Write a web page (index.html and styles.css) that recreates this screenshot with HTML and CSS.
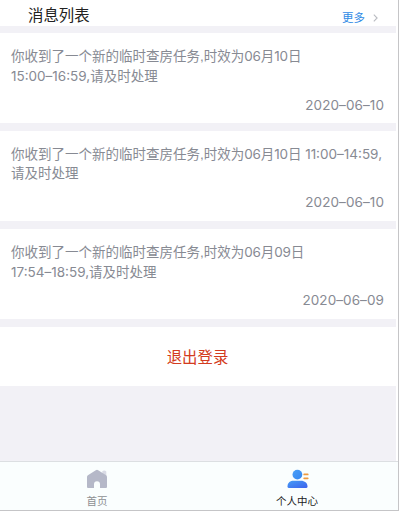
FILE: index.html
```
<!DOCTYPE html>
<html lang="zh-CN">
<head>
<meta charset="UTF-8">
<title>个人中心</title>
<link rel="stylesheet" href="styles.css">
</head>
<body>
<div class="phone">
  <main class="content">
    <header class="header">
      <h1 class="title">消息列表</h1>
      <a class="more">更多<svg class="chevron" width="5" height="8" viewBox="0 0 5 8"><path d="M0.8 0.7 4.1 4 0.8 7.3" fill="none" stroke="#b9bbc1" stroke-width="1.1"/></svg></a>
    </header>
    <section class="message">
      <p class="text">你收到了一个新的临时查房任务,时效为<span class="num">06</span>月<span class="num">10</span>日<br><span class="range">15:00–16:59,</span>请及时处理</p>
      <time class="date">2020–06–10</time>
    </section>
    <section class="message">
      <p class="text">你收到了一个新的临时查房任务,时效为<span class="num">06</span>月<span class="num">10</span>日 <span class="range">11:00–14:59,</span><br>请及时处理</p>
      <time class="date">2020–06–10</time>
    </section>
    <section class="message">
      <p class="text">你收到了一个新的临时查房任务,时效为<span class="num">06</span>月<span class="num">09</span>日<br><span class="range">17:54–18:59,</span>请及时处理</p>
      <time class="date">2020–06–09</time>
    </section>
    <button class="logout">退出登录</button>
  </main>
  <nav class="tabs">
    <a class="tab">
      <svg class="icon" width="22" height="20" viewBox="0 0 22 20"><path d="M16.3 2.2Q18.4 .8 20.3 2.4V7H16.3z" fill="#d9dbe5"/><path d="M1 8Q1 6.9 1.9 6.3L9.8 1.2Q11 .5 12.2 1.2L20.1 6.3Q21 6.9 21 8V18Q21 19 20 19H14V15.2A3 3 0 0 0 8 15.2V19H2Q1 19 1 18z" fill="#b5b8c8"/></svg>
      <span>首页</span>
    </a>
    <a class="tab active">
      <svg class="icon" width="22" height="20" viewBox="0 0 22 20">
        <defs>
          <linearGradient id="head" x1="0" y1="0" x2="1" y2="1"><stop offset="0" stop-color="#4c9ff5"/><stop offset="1" stop-color="#3586f3"/></linearGradient>
          <linearGradient id="body" x1="0" y1="0" x2="1" y2="1"><stop offset="0" stop-color="#459cf6"/><stop offset="1" stop-color="#3d62ec"/></linearGradient>
        </defs>
        <circle cx="10.4" cy="5.6" r="4.9" fill="url(#head)"/>
        <path d="M.5 17.5C.5 13.5 3.5 11.8 6.5 11.8H14C17.5 11.8 20.5 14 20.5 17.5Q20.5 19 19 19H2Q.5 19 .5 17.5z" fill="url(#body)"/>
        <path d="M17.2 5.4H20.7M17.2 9.3H20.7" stroke="#f09a3e" stroke-width="1.8" stroke-linecap="round"/>
      </svg>
      <span>个人中心</span>
    </a>
  </nav>
</div>
</body>
</html>
```
FILE: styles.css
```
* { box-sizing: border-box; }
body {
  margin: 0;
  background: #fff;
  font-family: "Liberation Sans", "Noto Sans CJK SC", sans-serif;
}
.phone {
  width: 399px;
  height: 511px;
  display: flex;
  flex-direction: column;
  border-right: 1px solid #c5c5c7;
  border-bottom: 1px solid #c5c5c7;
  overflow: hidden;
}
.content {
  width: 396px;
  flex: 1;
  display: flex;
  flex-direction: column;
  gap: 7.8px;
  background: #f2f1f6;
}
.header {
  height: 25.5px;
  padding: 0 18px 0 28px;
  display: flex;
  justify-content: space-between;
  background: #fff;
}
.title {
  margin: 5px 0 0;
  font-size: 15.4px;
  line-height: 22px;
  font-weight: 400;
  color: #222;
}
.more {
  display: flex;
  align-items: center;
  gap: 8px;
  height: 16px;
  margin-top: 10px;
  font-size: 11.5px;
  line-height: 16px;
  color: #318be5;
}
.message {
  height: 90px;
  padding: 14px 12px 0 11px;
  display: flex;
  flex-direction: column;
  background: #fff;
  color: #878a93;
  font-size: 13.5px;
  line-height: 18.8px;
}
.text { margin: 0; white-space: nowrap; }
.num, .range, .date { font-family: Inter, "Liberation Sans", sans-serif; }
.num { letter-spacing: -0.2px; }
.range { letter-spacing: 0; }
.date {
  align-self: flex-end;
  margin-top: 9px;
  letter-spacing: 0.08px;
}
.logout {
  height: 59.5px;
  padding: 0 1px 1px 0;
  border: 0;
  background: #fff;
  color: #d33b20;
  font: inherit;
  font-size: 15.4px;
}
.tabs {
  height: 49px;
  display: flex;
  border-top: 1px solid #dcdfe2;
  background: #fafefe;
}
.tab {
  flex: none;
  width: 194px;
  display: flex;
  flex-direction: column;
  align-items: center;
  padding-top: 7px;
  font-size: 10.5px;
  line-height: 15px;
  color: #8e9093;
}
.tab.active {
  width: 206px;
  color: #222;
}
.active .icon { margin-left: 2px; }
.icon { margin-bottom: 5px; }
```
